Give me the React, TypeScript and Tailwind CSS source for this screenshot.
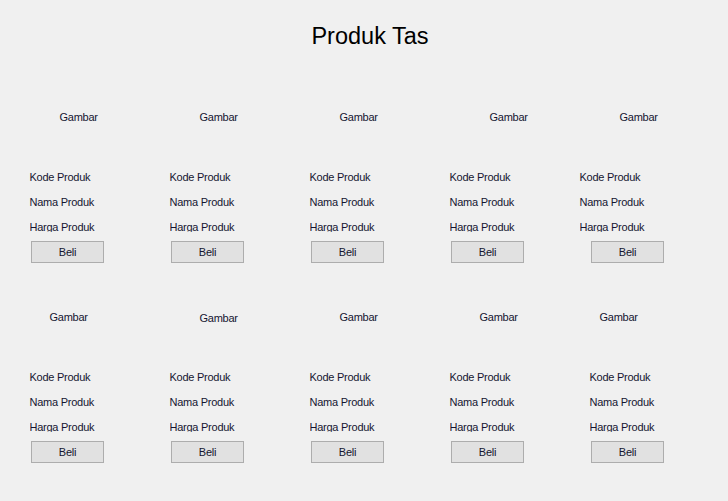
type Card = {
  gambarX: number
  gambarY?: number
  kodeX: number
}

const rows: Card[][] = [
  [
    { gambarX: 30, kodeX: 0 },
    { gambarX: 30, kodeX: 0 },
    { gambarX: 30, kodeX: 0 },
    { gambarX: 40, kodeX: 0 },
    { gambarX: 30, kodeX: -10 },
  ],
  [
    { gambarX: 20, kodeX: 0 },
    { gambarX: 30, gambarY: 1, kodeX: 0 },
    { gambarX: 30, kodeX: 0 },
    { gambarX: 30, kodeX: 0 },
    { gambarX: 10, kodeX: 0 },
  ],
]

function ProductCard({ card }: { card: Card }) {
  return (
    <div className="flex h-[200px] w-[140px] flex-col text-[11px] leading-[13px] tracking-[-0.25px] text-[#151530]">
      {/* gambar placeholder label */}
      <div
        className="h-[13px] whitespace-nowrap"
        style={{ marginLeft: card.gambarX - 0.5, marginTop: card.gambarY ?? 0 }}
      >
        Gambar
      </div>
      <div
        className="flex flex-col gap-[12px] whitespace-nowrap"
        style={{ marginLeft: card.kodeX - 0.5, marginTop: 47 - (card.gambarY ?? 0) }}
      >
        <div className="h-[13px]">Kode Produk</div>
        <div className="h-[13px]">Nama Produk</div>
        <div className="h-[11px] overflow-hidden">Harga Produk</div>
      </div>
      <button
        type="button"
        className="ml-[1px] mt-[9px] flex h-[22px] w-[73px] items-center justify-center border border-[#adadad] bg-[#e1e1e1] text-[11px] text-[#151530]"
      >
        Beli
      </button>
    </div>
  )
}

export default function App() {
  return (
    <div
      className="h-[501px] w-full overflow-hidden bg-[#f0f0f0]"
      style={{ fontFamily: '"Liberation Sans", Arial, sans-serif' }}
    >
      <div className="pl-[12px] pt-[23px] text-center text-[23.5px] leading-[26px] text-black">
        Produk Tas
      </div>
      <div className="mt-[62px] flex flex-col pl-[30px]">
        {rows.map((row, ri) => (
          <div key={ri} className="grid grid-cols-[repeat(5,140px)]">
            {row.map((card, ci) => (
              <ProductCard key={ci} card={card} />
            ))}
          </div>
        ))}
      </div>
    </div>
  )
}
